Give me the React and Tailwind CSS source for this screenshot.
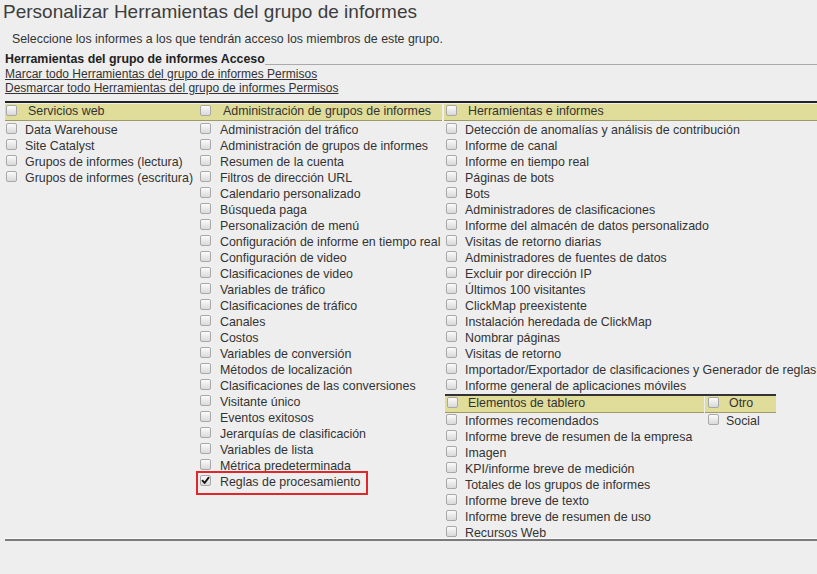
import React from 'react';

const servicios = [
    'Data Warehouse',
    'Site Catalyst',
    'Grupos de informes (lectura)',
    'Grupos de informes (escritura)',
];

const administracion = [
    'Administración del tráfico',
    'Administración de grupos de informes',
    'Resumen de la cuenta',
    'Filtros de dirección URL',
    'Calendario personalizado',
    'Búsqueda paga',
    'Personalización de menú',
    'Configuración de informe en tiempo real',
    'Configuración de video',
    'Clasificaciones de video',
    'Variables de tráfico',
    'Clasificaciones de tráfico',
    'Canales',
    'Costos',
    'Variables de conversión',
    'Métodos de localización',
    'Clasificaciones de las conversiones',
    'Visitante único',
    'Eventos exitosos',
    'Jerarquías de clasificación',
    'Variables de lista',
    'Métrica predeterminada',
];

const herramientas = [
    'Detección de anomalías y análisis de contribución',
    'Informe de canal',
    'Informe en tiempo real',
    'Páginas de bots',
    'Bots',
    'Administradores de clasificaciones',
    'Informe del almacén de datos personalizado',
    'Visitas de retorno diarias',
    'Administradores de fuentes de datos',
    'Excluir por dirección IP',
    'Últimos 100 visitantes',
    'ClickMap preexistente',
    'Instalación heredada de ClickMap',
    'Nombrar páginas',
    'Visitas de retorno',
    'Importador/Exportador de clasificaciones y Generador de reglas',
    'Informe general de aplicaciones móviles',
];

const tablero = [
    'Informes recomendados',
    'Informe breve de resumen de la empresa',
    'Imagen',
    'KPI/informe breve de medición',
    'Totales de los grupos de informes',
    'Informe breve de texto',
    'Informe breve de resumen de uso',
    'Recursos Web',
];

function Box({ checked, className = '' }) {
    return (
        <span className={`mt-px flex h-[11px] w-[11px] shrink-0 items-center justify-center rounded-[2px] border border-[#a8a8a8] bg-linear-to-b from-[#fbfbfb] to-[#d9d9d9] ${className}`}>
            {checked && (
                <svg width="9" height="9" viewBox="0 0 9 9">
                    <path d="M1.5 4.6 L3.6 7 L7.6 1.6" fill="none" stroke="#111" strokeWidth="1.8" strokeLinecap="round" strokeLinejoin="round" />
                </svg>
            )}
        </span>
    );
}

function Row({ label, boxMl, gap, checked }) {
    return (
        <div className="flex h-[16px] items-start whitespace-nowrap">
            <Box checked={checked} className={boxMl} />
            <span className={`leading-[16px] ${gap}`}>{label}</span>
        </div>
    );
}

function Header({ label, boxMl, gap }) {
    return (
        <div className="flex h-[17px] items-start whitespace-nowrap border-b border-[#9d9a6a] bg-[#e0dc9a]">
            <Box className={boxMl} />
            <span className={`leading-[15px] ${gap}`}>{label}</span>
        </div>
    );
}

export default function App() {
    return (
        <div className="h-[574px] w-[817px] overflow-hidden bg-[#eeeeee] font-['Liberation_Sans',Arial,sans-serif] text-[12.4px] text-[#333]">
            <div className="w-[960px]">
                <h1 className="h-[24px] pl-[3px] text-[19px] leading-[24px] text-[#3d3d3d]">
                    Personalizar Herramientas del grupo de informes
                </h1>
                <p className="mt-[7px] h-[16px] pl-[12px] text-[12.35px] leading-[16px]">
                    Seleccione los informes a los que tendrán acceso los miembros de este grupo.
                </p>

                <div className="mt-[4px] flex items-end pl-[5px]">
                    <span className="h-[16px] font-bold leading-[16px] text-[#222]">Herramientas del grupo de informes Acceso</span>
                    <span className="mb-[2px] flex-1 border-b border-[#aaa]" />
                </div>
                <div className="pl-[5px] text-[12px] leading-[14px]">
                    <a href="#" className="block w-fit underline">Marcar todo Herramientas del grupo de informes Permisos</a>
                    <a href="#" className="block w-fit underline">Desmarcar todo Herramientas del grupo de informes Permisos</a>
                </div>

                <div className="ml-[5px] mt-[6px] grid grid-cols-[193px_244px_1fr] border-t-2 border-[#222] pt-px">
                    <div className="flex flex-col">
                        <Header label="Servicios web" boxMl="ml-px" gap="ml-[11px]" />
                        <div className="mt-px">
                            {servicios.map((s) => (
                                <Row key={s} label={s} boxMl="ml-px" gap="ml-[8px]" />
                            ))}
                        </div>
                    </div>

                    <div className="flex flex-col">
                        <Header label="Administración de grupos de informes" boxMl="ml-[2px]" gap="ml-[12px]" />
                        <div className="mt-px">
                            {administracion.map((s) => (
                                <Row key={s} label={s} boxMl="ml-[2px]" gap="ml-[9px]" />
                            ))}
                            <div className="relative">
                                <Row label="Reglas de procesamiento" boxMl="ml-[2px]" gap="ml-[9px]" checked />
                                <span className="absolute -left-[2px] -top-[3px] h-[24px] w-[172px] border-2 border-[#e0282c]" />
                            </div>
                        </div>
                    </div>

                    <div className="flex flex-col">
                        <div className="ml-[2px]">
                            <Header label="Herramientas e informes" boxMl="ml-[2px]" gap="ml-[11px]" />
                        </div>
                        <div className="mt-px">
                            {herramientas.map((s) => (
                                <Row key={s} label={s} boxMl="ml-[4px]" gap="ml-[8px]" />
                            ))}
                        </div>

                        <div className="ml-[3px] grid w-[331px] grid-cols-[260px_1fr] border-t-2 border-[#333]">
                            <div>
                                <div className="mr-px">
                                    <Header label="Elementos de tablero" boxMl="ml-[2px]" gap="ml-[10px]" />
                                </div>
                                {tablero.map((s) => (
                                    <Row key={s} label={s} boxMl="ml-px" gap="ml-[8px]" />
                                ))}
                            </div>
                            <div>
                                <Header label="Otro" boxMl="ml-[3px]" gap="ml-[10px]" />
                                <Row label="Social" boxMl="ml-[3px]" gap="ml-[7px]" />
                            </div>
                        </div>
                    </div>
                </div>

                <div className="relative z-10 ml-[5px] -mt-[3px] h-px bg-[#fafafa]" />
                <div className="relative z-10 ml-[5px] h-[2px] bg-[#7a7a7a]" />
            </div>
        </div>
    );
}
